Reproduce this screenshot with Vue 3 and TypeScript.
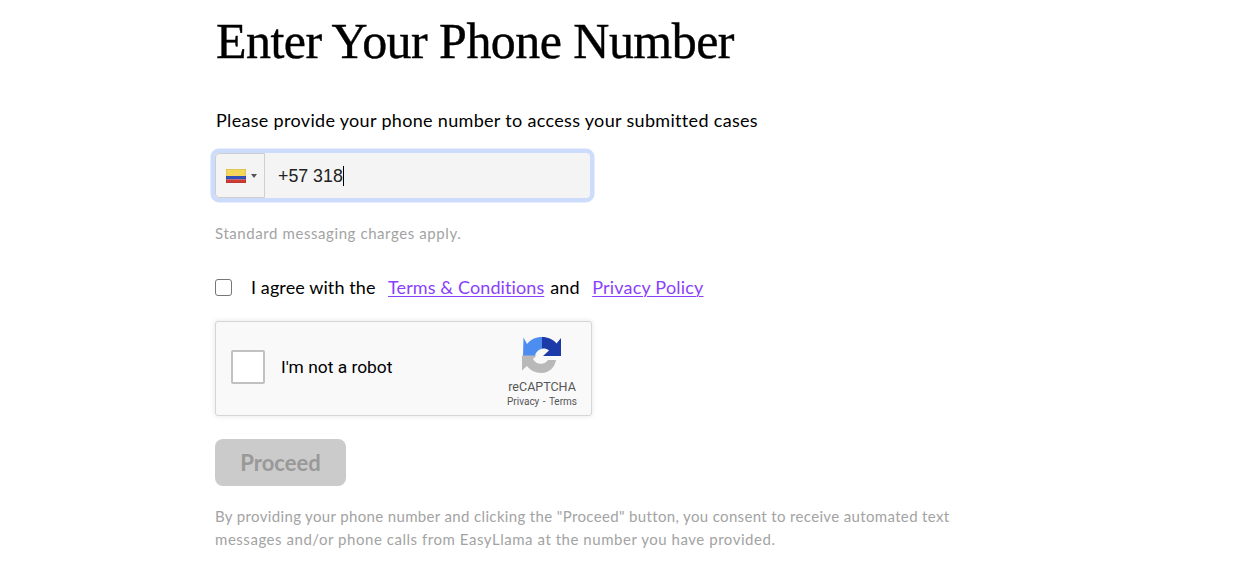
<script setup lang="ts">
const phone = '+57 318'
</script>

<template>
  <main class="page">
    <h1 class="title">Enter Your Phone Number</h1>
    <p class="lead">Please provide your phone number to access your submitted cases</p>

    <!-- Phone input, focused -->
    <div class="phone">
      <div class="phone__country">
        <svg class="phone__flag" viewBox="0 0 20 14" width="20" height="14" aria-hidden="true">
          <rect width="20" height="7" fill="#f4d75a" />
          <rect y="7" width="20" height="3.500" fill="#3350b8" />
          <rect y="10.500" width="20" height="3.500" fill="#cf3b35" />
          <rect x="0.250" y="0.250" width="19.500" height="13.500" fill="none" stroke="#000" stroke-opacity="0.15" stroke-width="0.500" />
        </svg>
        <span class="phone__arrow"></span>
      </div>
      <div class="phone__value">{{ phone }}<span class="phone__caret"></span></div>
    </div>
    <p class="hint">Standard messaging charges apply.</p>

    <div class="agree">
      <span class="agree__box"></span>
      <span class="agree__text">I agree with the</span>
      <a class="agree__link" href="#">Terms &amp; Conditions</a>
      <span class="agree__text agree__text--and">and</span>
      <a class="agree__link agree__link--privacy" href="#">Privacy Policy</a>
    </div>

    <!-- reCAPTCHA widget -->
    <div class="captcha">
      <span class="captcha__check"></span>
      <span class="captcha__label">I'm not a robot</span>
      <div class="captcha__brand">
        <svg class="captcha__logo" viewBox="0 0 40 40" width="40" height="40" aria-hidden="true">
          <path fill="#4e8df0" d="M20 1C14 1 8.500 3.600 5 8L1.500 1.500 1 20H13C13.500 16.500 16.200 13.500 20 12.700Z" />
          <path fill="#1d3ba8" d="M20 1C26 1 31.500 3.500 34.500 7.500L39 2V20H21L27 14.500C25 12.800 22.500 12.400 20 12.700Z" />
          <path fill="#b9b9b9" d="M0 19.500H14.500L11 23C13 27 17 28.500 21 27.500 23.200 27 24.500 25.800 26 24H34C33 31 27 37 19.500 37 13 37 8 34 5 30L0 34.500Z" />
        </svg>
        <span class="captcha__name">reCAPTCHA</span>
        <span class="captcha__links">Privacy - Terms</span>
      </div>
    </div>

    <button class="proceed" type="button" disabled>Proceed</button>

    <p class="legal">
      By providing your phone number and clicking the "Proceed" button, you consent to receive automated text
      <span class="legal__second">messages and/or phone calls from EasyLlama at the number you have provided.</span>
    </p>
  </main>
</template>

<style scoped>
.page {
  width: 760px;
  margin-left: 215px;
  font-family: Lato, "Noto Sans", sans-serif;
  color: #000;
}

.title {
  margin: 0 0 0 1px;
  padding-top: 12px;
  font-family: "Liberation Serif", serif;
  font-size: 50px;
  line-height: 58px;
  font-weight: 400;
  letter-spacing: -0.55px;
  white-space: nowrap;
  -webkit-text-stroke: 0.4px #000;
}

.lead {
  margin: 37px 0 0;
  padding-left: 1px;
  font-size: 18px;
  line-height: 26px;
  letter-spacing: 0.32px;
  white-space: nowrap;
}

.phone {
  display: flex;
  width: 375px;
  height: 45px;
  margin-top: 20px;
  border-radius: 4px;
  background: #f4f4f4;
  box-shadow: 0 0 0 4.5px #cddcfb;
}

.phone__country {
  display: flex;
  align-items: center;
  width: 50px;
  flex: none;
  padding-left: 10px;
  gap: 5px;
  box-sizing: border-box;
  border: 1px solid #cfcfcf;
  border-radius: 4px 0 0 4px;
}

.phone__flag {
  display: block;
  flex: none;
}

.phone__arrow {
  width: 0;
  height: 0;
  border-left: 3px solid transparent;
  border-right: 3px solid transparent;
  border-top: 4px solid #555;
}

.phone__value {
  display: flex;
  align-items: center;
  padding: 1px 0 0 13px;
  font-family: "Liberation Sans", Arial, sans-serif;
  font-size: 17.8px;
  color: #222;
}

.phone__caret {
  display: block;
  width: 1px;
  height: 20px;
  background: #000;
}

.hint {
  margin: 25px 0 0;
  font-size: 15px;
  line-height: 20px;
  letter-spacing: 0.58px;
  color: #a3a3a3;
}

.agree {
  display: flex;
  align-items: center;
  height: 24px;
  margin-top: 32px;
  font-size: 18px;
  letter-spacing: 0.1px;
}

.agree__box {
  width: 17px;
  height: 17px;
  flex: none;
  box-sizing: border-box;
  border: 1.5px solid #767676;
  border-radius: 3px;
  background: #fff;
}

.agree__text {
  margin-left: 19px;
}

.agree__text--and {
  margin-left: 6px;
}

.agree__link {
  margin-left: 12.5px;
  color: #8a3ffc;
  text-decoration: underline;
  text-underline-offset: 2px;
  text-decoration-thickness: 1px;
}

.agree__link--privacy {
  letter-spacing: 0.2px;
}

.captcha {
  display: flex;
  align-items: center;
  width: 377px;
  height: 95px;
  margin-top: 22px;
  box-sizing: border-box;
  padding: 0 0 3px 15px;
  border: 1px solid #d6d6d6;
  border-radius: 3px;
  background: #f9f9f9;
  box-shadow: 0 0 4px 1px rgba(0, 0, 0, 0.08);
  font-family: Roboto, Arial, sans-serif;
}

.captcha__check {
  width: 34px;
  height: 34px;
  flex: none;
  box-sizing: border-box;
  border: 2px solid #c1c1c1;
  border-radius: 2px;
  background: #fff;
}

.captcha__label {
  margin-left: 16px;
  font-size: 17.4px;
  color: #000;
}

.captcha__brand {
  display: flex;
  flex-direction: column;
  align-items: center;
  margin-top: 9px;
  margin-left: auto;
  margin-right: 14px;
  color: #555;
}

.captcha__logo {
  display: block;
  margin-bottom: 3px;
}

.captcha__name {
  font-size: 12.5px;
  line-height: 16px;
}

.captcha__links {
  font-size: 10px;
  line-height: 13px;
  word-spacing: 1px;
}

.proceed {
  display: block;
  width: 131px;
  height: 47px;
  margin-top: 23px;
  border: none;
  border-radius: 8px;
  background: #cbcbcb;
  color: #999;
  font-family: Lato, sans-serif;
  font-size: 22px;
  font-weight: 700;
}

.legal {
  margin: 19px 0 0;
  width: 750px;
  font-size: 15px;
  line-height: 23px;
  letter-spacing: 0.35px;
  color: #a3a3a3;
}

.legal__second {
  letter-spacing: 0.54px;
}
</style>
